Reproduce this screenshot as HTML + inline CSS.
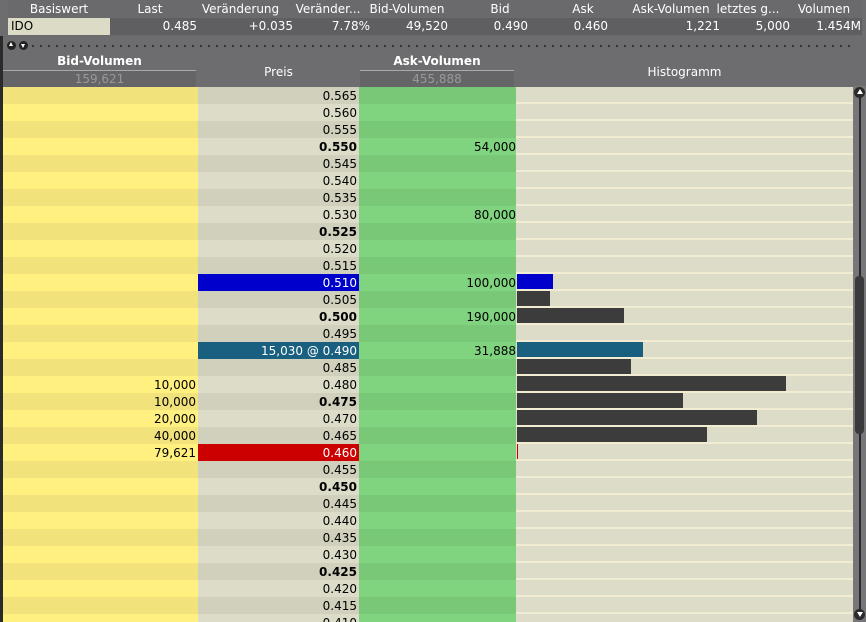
<!DOCTYPE html>
<html><head><meta charset="utf-8">
<style>
*{margin:0;padding:0;box-sizing:border-box}
html,body{width:866px;height:622px;overflow:hidden}
body{background:#6d6d70;font-family:"DejaVu Sans","Liberation Sans",sans-serif;font-size:12px;position:relative}
.a{position:absolute}
.top{left:8px;top:0;width:854px;height:36px;background:#6a6a6d}
.h1 div,.h2 div{position:absolute;top:0;height:18px;line-height:18px;white-space:nowrap}
.h1 div{color:#fff;text-align:center}
.h2{position:absolute;left:0;top:18px;width:854px;height:17px;background:#5f5f62}
.h2 div{height:17px;line-height:17px;color:#fff;text-align:right}
.wrap{position:absolute;left:0;top:1px;width:866px;height:640px}
.row{position:absolute;left:3px;width:850px;height:17px;line-height:19px}
.row div{position:absolute;top:0;height:17px;text-align:right;padding-right:2px;color:#000}
.b{left:0;width:195px}
.p{left:195px;width:161px}
.k{left:356px;width:157px;padding-right:0!important}
.g{left:513px;width:337px;background:#dcdcc8;border-bottom:2px solid #f2edd2}
.o .b{background:#f1e27c}.o .p{background:#d0d0bc}.o .k{background:#78c878}
.e .b{background:#fff080}.e .p{background:#dcdcc8}.e .k{background:#80d480}
.bar{position:absolute;left:1px;top:0;height:15px;background:#3c3c3c}
strong{font-weight:bold}
</style></head><body>
<div class="a" style="left:0;top:36px;width:3px;height:586px;background:#2a2a2a"></div>
<div class="a top">
 <div class="h1">
  <div style="left:0;width:102px">Basiswert</div>
  <div style="left:102px;width:80px">Last</div>
  <div style="left:184px;width:97px">Veränderung</div>
  <div style="left:281px;width:78px">Veränder...</div>
  <div style="left:359px;width:80px">Bid-Volumen</div>
  <div style="left:440px;width:104px;">Bid</div>
  <div style="left:530px;width:90px">Ask</div>
  <div style="left:618px;width:90px">Ask-Volumen</div>
  <div style="left:703px;width:74px">letztes g...</div>
  <div style="left:778px;width:76px">Volumen</div>
 </div>
 <div class="h2">
  <div style="left:0;width:102px;background:#dcdcc6;color:#000;text-align:left;padding-left:3px">IDO</div>
  <div style="left:102px;width:87px">0.485</div>
  <div style="left:189px;width:96px">+0.035</div>
  <div style="left:285px;width:77px">7.78%</div>
  <div style="left:362px;width:78px">49,520</div>
  <div style="left:440px;width:80px">0.490</div>
  <div style="left:520px;width:80px">0.460</div>
  <div style="left:600px;width:112px">1,221</div>
  <div style="left:712px;width:70px">5,000</div>
  <div style="left:782px;width:71px">1.454M</div>
 </div>
</div>
<div class="a" style="left:7px;top:41px;width:9px;height:9px;border-radius:50%;background:#222"></div>
<div class="a" style="left:19px;top:41px;width:9px;height:9px;border-radius:50%;background:#222"></div>
<div class="a" style="left:9px;top:42px;width:0;height:0;border-left:2.5px solid transparent;border-right:2.5px solid transparent;border-bottom:4px solid #fff"></div>
<div class="a" style="left:21px;top:44px;width:0;height:0;border-left:2.5px solid transparent;border-right:2.5px solid transparent;border-top:4px solid #fff"></div>
<div class="a" style="left:32px;top:45px;width:820px;height:2px;background:repeating-linear-gradient(90deg,#333 0 2px,transparent 2px 8px)"></div>
<div class="a" style="left:3px;top:52px;width:850px;height:35px;background:#6d6d70"></div>
<div class="a" style="left:3px;top:53px;width:193px;height:17px;line-height:17px;text-align:center;color:#fff;font-weight:bold">Bid-Volumen</div>
<div class="a" style="left:3px;top:70px;width:193px;height:1px;background:#aaa"></div>
<div class="a" style="left:3px;top:71px;width:193px;height:16px;line-height:16px;text-align:center;color:#999;background:#656568">159,621</div>
<div class="a" style="left:198px;top:53px;width:161px;height:34px;line-height:38px;text-align:center;color:#fff">Preis</div>
<div class="a" style="left:360px;top:53px;width:154px;height:17px;line-height:17px;text-align:center;color:#fff;font-weight:bold">Ask-Volumen</div>
<div class="a" style="left:360px;top:70px;width:154px;height:1px;background:#aaa"></div>
<div class="a" style="left:360px;top:71px;width:154px;height:16px;line-height:16px;text-align:center;color:#999;background:#656568">455,888</div>
<div class="a" style="left:516px;top:53px;width:337px;height:34px;line-height:38px;text-align:center;color:#fff">Histogramm</div>

<div class="wrap">
<div class="row o" style="top:86px"><div class="b"></div><div class="p">0.565</div><div class="k"></div><div class="g"></div></div>
<div class="row e" style="top:103px"><div class="b"></div><div class="p">0.560</div><div class="k"></div><div class="g"></div></div>
<div class="row o" style="top:120px"><div class="b"></div><div class="p">0.555</div><div class="k"></div><div class="g"></div></div>
<div class="row e" style="top:137px"><div class="b"></div><div class="p"><strong>0.550</strong></div><div class="k">54,000</div><div class="g"></div></div>
<div class="row o" style="top:154px"><div class="b"></div><div class="p">0.545</div><div class="k"></div><div class="g"></div></div>
<div class="row e" style="top:171px"><div class="b"></div><div class="p">0.540</div><div class="k"></div><div class="g"></div></div>
<div class="row o" style="top:188px"><div class="b"></div><div class="p">0.535</div><div class="k"></div><div class="g"></div></div>
<div class="row e" style="top:205px"><div class="b"></div><div class="p">0.530</div><div class="k">80,000</div><div class="g"></div></div>
<div class="row o" style="top:222px"><div class="b"></div><div class="p"><strong>0.525</strong></div><div class="k"></div><div class="g"></div></div>
<div class="row e" style="top:239px"><div class="b"></div><div class="p">0.520</div><div class="k"></div><div class="g"></div></div>
<div class="row o" style="top:256px"><div class="b"></div><div class="p">0.515</div><div class="k"></div><div class="g"></div></div>
<div class="row e" style="top:273px"><div class="b"></div><div class="p" style="background:#0000cc;color:#fff">0.510</div><div class="k">100,000</div><div class="g"><span class="bar" style="width:36px;background:#0000cc"></span></div></div>
<div class="row o" style="top:290px"><div class="b"></div><div class="p">0.505</div><div class="k"></div><div class="g"><span class="bar" style="width:33px"></span></div></div>
<div class="row e" style="top:307px"><div class="b"></div><div class="p"><strong>0.500</strong></div><div class="k">190,000</div><div class="g"><span class="bar" style="width:107px"></span></div></div>
<div class="row o" style="top:324px"><div class="b"></div><div class="p">0.495</div><div class="k"></div><div class="g"></div></div>
<div class="row e" style="top:341px"><div class="b"></div><div class="p" style="background:#195f80;color:#fff">15,030 @ 0.490</div><div class="k">31,888</div><div class="g"><span class="bar" style="width:126px;background:#195f80"></span></div></div>
<div class="row o" style="top:358px"><div class="b"></div><div class="p">0.485</div><div class="k"></div><div class="g"><span class="bar" style="width:114px"></span></div></div>
<div class="row e" style="top:375px"><div class="b">10,000</div><div class="p">0.480</div><div class="k"></div><div class="g"><span class="bar" style="width:269px"></span></div></div>
<div class="row o" style="top:392px"><div class="b">10,000</div><div class="p"><strong>0.475</strong></div><div class="k"></div><div class="g"><span class="bar" style="width:166px"></span></div></div>
<div class="row e" style="top:409px"><div class="b">20,000</div><div class="p">0.470</div><div class="k"></div><div class="g"><span class="bar" style="width:240px"></span></div></div>
<div class="row o" style="top:426px"><div class="b">40,000</div><div class="p">0.465</div><div class="k"></div><div class="g"><span class="bar" style="width:190px"></span></div></div>
<div class="row e" style="top:443px"><div class="b">79,621</div><div class="p" style="background:#cc0000;color:#fff">0.460</div><div class="k"></div><div class="g"><span class="bar" style="width:1px;background:#cc0000"></span></div></div>
<div class="row o" style="top:460px"><div class="b"></div><div class="p">0.455</div><div class="k"></div><div class="g"></div></div>
<div class="row e" style="top:477px"><div class="b"></div><div class="p"><strong>0.450</strong></div><div class="k"></div><div class="g"></div></div>
<div class="row o" style="top:494px"><div class="b"></div><div class="p">0.445</div><div class="k"></div><div class="g"></div></div>
<div class="row e" style="top:511px"><div class="b"></div><div class="p">0.440</div><div class="k"></div><div class="g"></div></div>
<div class="row o" style="top:528px"><div class="b"></div><div class="p">0.435</div><div class="k"></div><div class="g"></div></div>
<div class="row e" style="top:545px"><div class="b"></div><div class="p">0.430</div><div class="k"></div><div class="g"></div></div>
<div class="row o" style="top:562px"><div class="b"></div><div class="p"><strong>0.425</strong></div><div class="k"></div><div class="g"></div></div>
<div class="row e" style="top:579px"><div class="b"></div><div class="p">0.420</div><div class="k"></div><div class="g"></div></div>
<div class="row o" style="top:596px"><div class="b"></div><div class="p">0.415</div><div class="k"></div><div class="g"></div></div>
<div class="row e" style="top:613px"><div class="b"></div><div class="p">0.410</div><div class="k"></div><div class="g"></div></div>
</div>

<div class="a" style="left:853px;top:86px;width:13px;height:536px;background:#77777a"></div>
<div class="a" style="left:859px;top:92px;width:2px;height:522px;background:#2a2a2a"></div>
<div class="a" style="left:855px;top:276px;width:9px;height:158px;border-radius:4px;background:#3a3a3c"></div>
<div class="a" style="left:854px;top:87px;width:11px;height:11px;border-radius:50%;background:#2a2a2a"></div>
<div class="a" style="left:856.5px;top:89px;width:0;height:0;border-left:3px solid transparent;border-right:3px solid transparent;border-bottom:5px solid #fff"></div>
<div class="a" style="left:854px;top:609px;width:11px;height:11px;border-radius:50%;background:#2a2a2a"></div>
<div class="a" style="left:856.5px;top:612px;width:0;height:0;border-left:3px solid transparent;border-right:3px solid transparent;border-top:5px solid #fff"></div>
</body></html>
